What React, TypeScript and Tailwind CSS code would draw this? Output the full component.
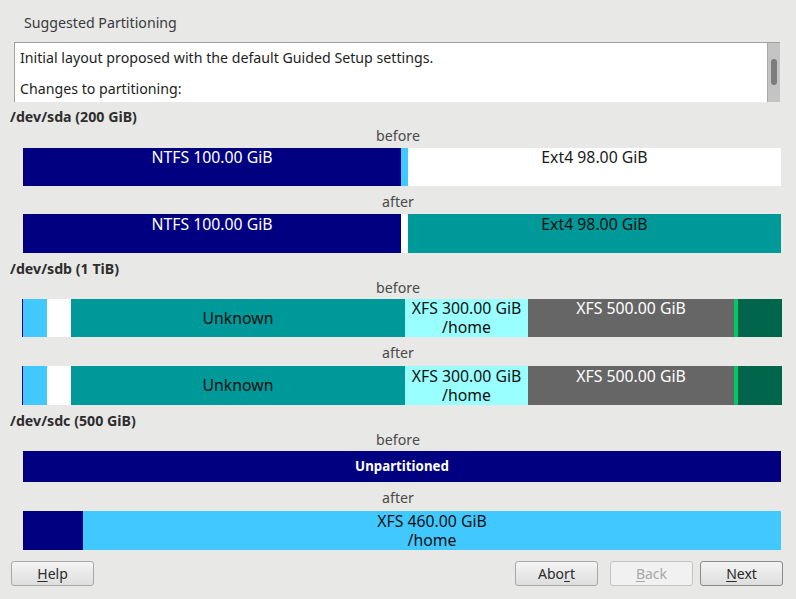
import React from 'react';

type Seg = { w: number; bg: string; text?: string; sub?: string; fg?: string; bold?: boolean };

const sdaBefore: Seg[] = [
  { w: 378, bg: 'bg-[#000080]', text: 'NTFS 100.00 GiB', sub: ' ', fg: 'text-white' },
  { w: 7, bg: 'bg-[#40c8ff]' },
  { w: 373, bg: 'bg-white', text: 'Ext4 98.00 GiB', sub: ' ', fg: 'text-[#1a1a1a]' },
];

const sdaAfter: Seg[] = [
  { w: 378, bg: 'bg-[#000080]', text: 'NTFS 100.00 GiB', sub: ' ', fg: 'text-white' },
  { w: 7, bg: 'bg-white' },
  { w: 373, bg: 'bg-[#009999]', text: 'Ext4 98.00 GiB', sub: ' ', fg: 'text-[#111]' },
];

const sdb: Seg[] = [
  { w: 1, bg: 'bg-[#000080]' },
  { w: 24, bg: 'bg-[#40c8ff]' },
  { w: 24, bg: 'bg-white' },
  { w: 334, bg: 'bg-[#009999]', text: 'Unknown', fg: 'text-[#111]' },
  { w: 123, bg: 'bg-[#99ffff]', text: 'XFS 300.00 GiB', sub: '/home', fg: 'text-[#111]' },
  { w: 206, bg: 'bg-[#666666]', text: 'XFS 500.00 GiB', sub: ' ', fg: 'text-white' },
  { w: 4, bg: 'bg-[#00c864]' },
  { w: 44, bg: 'bg-[#00664b]' },
];

const sdcBefore: Seg[] = [
  { w: 758, bg: 'bg-[#000080]', text: 'Unpartitioned', fg: 'text-white', bold: true },
];

const sdcAfter: Seg[] = [
  { w: 60, bg: 'bg-[#000080]' },
  { w: 698, bg: 'bg-[#40c8ff]', text: 'XFS 460.00 GiB', sub: '/home', fg: 'text-[#111]' },
];

function Bar({ segs, h, left }: { segs: Seg[]; h: string; left: string }) {
  return (
    <div className={`flex ${h} ${left}`}>
      {segs.map((s, i) => (
        <div
          key={i}
          className={`${s.bg} ${s.fg ?? ''} ${s.bold ? 'font-bold text-[13.3px]' : 'text-[15.8px]'} shrink-0 flex flex-col items-center justify-center whitespace-nowrap leading-[19px]`}
          style={{ width: s.w }}
        >
          {s.text && <div className="h-[19px]">{s.text}</div>}
          {s.sub && <div className="h-[19px] whitespace-pre">{s.sub}</div>}
        </div>
      ))}
    </div>
  );
}

function Caption({ children, h, pt }: { children: React.ReactNode; h: string; pt: string }) {
  return <div className={`${h} ${pt} text-center text-[#4a4a4a] leading-[19px]`}>{children}</div>;
}

function Disk({ children, h }: { children: React.ReactNode; h: string }) {
  return <div className={`${h} pt-[6px] pl-[10px] font-bold text-[#2e2e2e] leading-[19px]`}>{children}</div>;
}

function Btn({ children, disabled, primary }: { children: React.ReactNode; disabled?: boolean; primary?: boolean }) {
  return (
    <button
      className={`w-[83px] h-[25px] rounded-[3px] border text-[14px] leading-[19px] ${
        disabled
          ? 'border-[#c4c4c4] bg-[#f1f1f1] text-[#a8a8a8]'
          : primary
          ? 'border-[#8a8a8a] bg-gradient-to-b from-[#f4f4f4] to-[#dedede] text-[#2a2a2a]'
          : 'border-[#a8a8a8] bg-gradient-to-b from-[#f4f4f4] to-[#dedede] text-[#2a2a2a]'
      }`}
    >
      {children}
    </button>
  );
}

export default function App() {
  return (
    <div className="w-[796px] h-[599px] bg-[#e8e8e7] text-[14.2px] overflow-hidden" style={{ fontFamily: '"Noto Sans", "DejaVu Sans", sans-serif' }}>
      {/* Title */}
      <div className="h-[42px] pl-[24px] pt-[13px] leading-[19px] text-[#3a3a3a]">Suggested Partitioning</div>

      {/* Summary box */}
      <div className="ml-[14px] w-[766px] h-[60px] flex bg-white border-t border-l border-[#a0a0a0]">
        <div className="flex-1 pl-[5px] pt-[5px] overflow-hidden text-[#1e1e1e] leading-[19px]">
          <p className="mb-[12px]">Initial layout proposed with the default Guided Setup settings.</p>
          <p>Changes to partitioning:</p>
        </div>
        <div className="w-[13px] bg-[#c4c4c4] border-l border-[#a8a8a8] pt-[16px] flex justify-center">
          <div className="w-[6px] h-[26px] rounded-full bg-[#7d7d7d]" />
        </div>
      </div>

      {/* /dev/sda */}
      <Disk h="h-[24px] !pt-[5px]">/dev/sda (200 GiB)</Disk>
      <Caption h="h-[22px]" pt="pt-0">before</Caption>
      <Bar segs={sdaBefore} h="h-[38px]" left="ml-[23px]" />
      <Caption h="h-[28px]" pt="pt-[6px]">after</Caption>
      <Bar segs={sdaAfter} h="h-[39px]" left="ml-[23px]" />

      {/* /dev/sdb */}
      <Disk h="h-[25px]">/dev/sdb (1 TiB)</Disk>
      <Caption h="h-[21px]" pt="pt-0">before</Caption>
      <Bar segs={sdb} h="h-[38px]" left="ml-[22px]" />
      <Caption h="h-[29px]" pt="pt-[6px]">after</Caption>
      <Bar segs={sdb} h="h-[39px]" left="ml-[22px]" />

      {/* /dev/sdc */}
      <Disk h="h-[25px]">/dev/sdc (500 GiB)</Disk>
      <Caption h="h-[21px]" pt="pt-0">before</Caption>
      <Bar segs={sdcBefore} h="h-[31px]" left="ml-[23px]" />
      <Caption h="h-[29px]" pt="pt-[6px]">after</Caption>
      <Bar segs={sdcAfter} h="h-[39px]" left="ml-[23px]" />

      {/* Buttons */}
      <div className="mt-[11px] flex items-center pl-[11px] pr-[13px]">
        <Btn><span className="underline underline-offset-2">H</span>elp</Btn>
        <div className="flex-1" />
        <Btn>Abo<span className="underline underline-offset-2">r</span>t</Btn>
        <div className="w-[12px]" />
        <Btn disabled><span className="underline underline-offset-2">B</span>ack</Btn>
        <div className="w-[7px]" />
        <Btn primary><span className="underline underline-offset-2">N</span>ext</Btn>
      </div>
    </div>
  );
}
